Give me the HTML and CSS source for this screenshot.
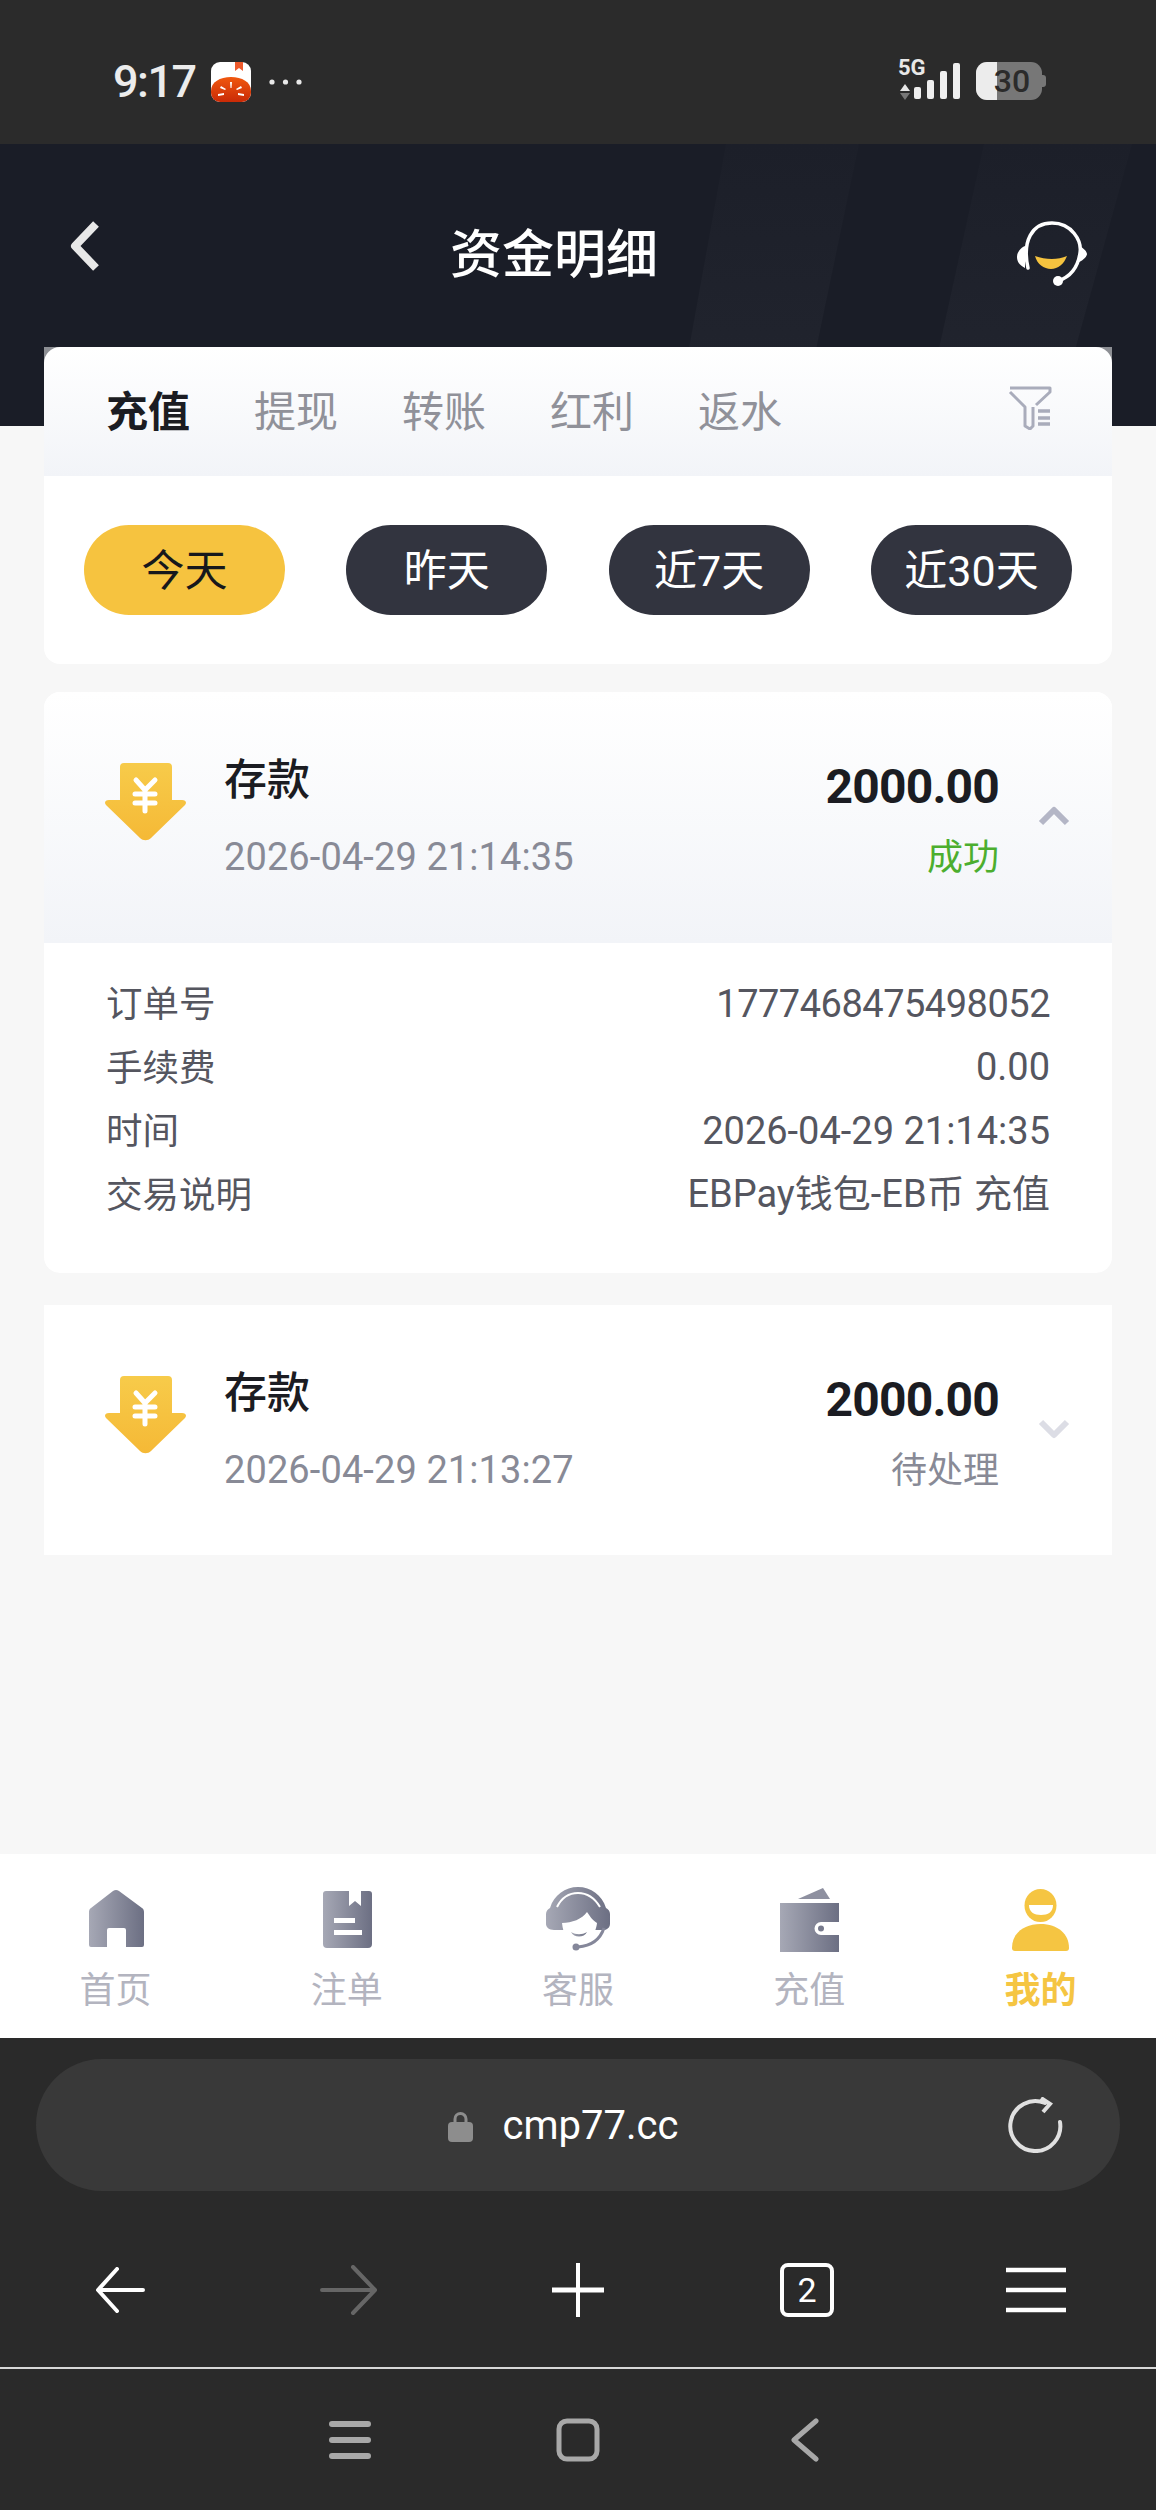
FILE: index.html
```html
<!DOCTYPE html>
<html lang="zh">
<head>
<meta charset="utf-8">
<title>资金明细</title>
<link rel="stylesheet" href="styles.css">
</head>
<body>
<div class="phone">
  <div class="status">
    <div class="status-left">
      <span class="clock">9:17</span>
      <svg class="app" width="40" height="40" viewBox="0 0 40 40"><defs><linearGradient id="tom" x1="0" y1="0" x2="0" y2="1"><stop offset="0" stop-color="#f0580f"/><stop offset="1" stop-color="#c92a06"/></linearGradient></defs><rect width="40" height="40" rx="9" fill="#fff"/><path d="M24 0h8v9l-4-3-4 3z" fill="#ee5a2c"/><path d="M0 29C0 20 9 15 20 15s20 5 20 14v2a9 9 0 0 1-9 9H9a9 9 0 0 1-9-9z" fill="url(#tom)"/><path d="M19 20h2l-.5 6h-1zM10 24l5 3-1 1-5-2zM30 24l1 2-5 2-1-1zM7 32l6-1v2l-6 1zM33 32v2l-6-1v-2z" fill="#fff"/></svg>
      <svg class="more" width="33" height="6" viewBox="0 0 33 6"><circle cx="3" cy="3" r="2.6" fill="#e8e8e8"/><circle cx="16.5" cy="3" r="2.6" fill="#e8e8e8"/><circle cx="30" cy="3" r="2.6" fill="#e8e8e8"/></svg>
    </div>
    <div class="status-right">
      <div class="net">
        <span class="net-label">5G</span>
        <svg width="10" height="16" viewBox="0 0 10 16"><path d="M5 0l5 7H0z" fill="#e8e8e8"/><path d="M0 9h10l-5 7z" fill="#777"/></svg>
      </div>
      <svg class="bars" width="46" height="36" viewBox="0 0 46 36"><rect y="24" width="7" height="12" rx="2" fill="#eee"/><rect x="13" y="17" width="7" height="19" rx="2" fill="#eee"/><rect x="26" y="8" width="7" height="28" rx="2" fill="#eee"/><rect x="39" width="7" height="36" rx="2" fill="#eee"/></svg>
      <div class="battery">
        <span class="battery-fill"></span>
        <span class="battery-num">30</span>
        <span class="battery-cap"></span>
      </div>
    </div>
  </div>

  <header class="head">
    <svg class="stripes" width="1156" height="282" viewBox="0 0 1156 282"><defs><linearGradient id="band" x1="0" y1="0" x2="0" y2="1"><stop offset="0" stop-color="#1c1f29"/><stop offset="1" stop-color="#22252f"/></linearGradient></defs><path d="M726 0h133l-59 282H675z" fill="url(#band)"/><path d="M984 0h148l-78 282H922z" fill="url(#band)"/></svg>
    <svg class="head-back" width="32" height="52" viewBox="0 0 32 52"><path d="M27 4L6 26l21 22" fill="none" stroke="#e8e8e8" stroke-width="8" stroke-linejoin="round"/></svg>
    <h1 class="head-title">资金明细</h1>
    <svg class="head-agent" width="72" height="66" viewBox="0 0 72 66"><path d="M12 47C6 20 16 2 36 2c20 0 30 18 28 30-2 14-10 24-22 28" fill="none" stroke="#fff" stroke-width="3.500" stroke-linecap="round"/><path d="M9 25v22C3 44 1 40 1 36s3-9 8-11zM63 25c5 2 8 6 8 8s-3 6-8 8z" fill="#fff"/><circle cx="42" cy="60" r="5" fill="#fff"/><path d="M19 35c11 4 23 4 32 0-3 8-9 13-16 13S21 43 19 35z" fill="#f5c33f"/></svg>
  </header>

  <main class="content">
    <section class="filter-card">
      <div class="tabs-wrap">
        <div class="tabs">
          <span class="tab tab-on">充值</span>
          <span class="tab">提现</span>
          <span class="tab">转账</span>
          <span class="tab">红利</span>
          <span class="tab">返水</span>
          <svg class="filter-ico" width="44" height="44" viewBox="0 0 44 44"><path d="M2 2h40v4L28 19M2 6l15 15v19l5 3 3-3V21" fill="none" stroke="#a9acbb" stroke-width="3" stroke-linejoin="round"/><path d="M30 25h12M30 32h12M30 38h12" stroke="#a9acbb" stroke-width="3.500"/></svg>
        </div>
      </div>
      <div class="pills">
        <span class="pill pill-on">今天</span>
        <span class="pill">昨天</span>
        <span class="pill">近7天</span>
        <span class="pill">近30天</span>
      </div>
    </section>

    <section class="record">
      <div class="rec-head rec-head-open">
        <svg class="rec-ico" width="81" height="78" viewBox="0 0 81 78"><defs><linearGradient id="gold" x1="0" y1="0" x2="0" y2="1"><stop offset="0" stop-color="#f7cb4a"/><stop offset="1" stop-color="#f5b936"/></linearGradient></defs><path d="M19 0h44a4 4 0 0 1 4 4v33h10c4 0 5 3 3 5L46 75c-3 3-8 3-11 0L1 42c-2-2-1-5 3-5h11V4a4 4 0 0 1 4-4z" fill="url(#gold)"/><path d="M31 17l9 10 10-10M40 27v21M30 31h20M30 40h20" fill="none" stroke="#fff" stroke-width="5" stroke-linecap="round"/></svg>
        <div class="rec-main">
          <div class="rec-title">存款</div>
          <div class="rec-date">2026-04-29 21:14:35</div>
        </div>
        <div class="rec-side">
          <div class="rec-amount">2000.00</div>
          <div class="rec-state rec-ok">成功</div>
        </div>
        <svg class="rec-chev" width="32" height="20" viewBox="0 0 32 20"><path d="M3 17L16 4l13 13" fill="none" stroke="#b4b6c6" stroke-width="6" stroke-linejoin="round"/></svg>
      </div>
      <dl class="details">
        <div class="row"><dt>订单号</dt><dd class="tight">1777468475498052</dd></div>
        <div class="row"><dt>手续费</dt><dd>0.00</dd></div>
        <div class="row"><dt>时间</dt><dd>2026-04-29 21:14:35</dd></div>
        <div class="row"><dt>交易说明</dt><dd>EBPay钱包-EB币 充值</dd></div>
      </dl>
    </section>

    <section class="record record-flat">
      <div class="rec-head">
        <svg class="rec-ico" width="81" height="78" viewBox="0 0 81 78"><path d="M19 0h44a4 4 0 0 1 4 4v33h10c4 0 5 3 3 5L46 75c-3 3-8 3-11 0L1 42c-2-2-1-5 3-5h11V4a4 4 0 0 1 4-4z" fill="url(#gold)"/><path d="M31 17l9 10 10-10M40 27v21M30 31h20M30 40h20" fill="none" stroke="#fff" stroke-width="5" stroke-linecap="round"/></svg>
        <div class="rec-main">
          <div class="rec-title">存款</div>
          <div class="rec-date">2026-04-29 21:13:27</div>
        </div>
        <div class="rec-side">
          <div class="rec-amount">2000.00</div>
          <div class="rec-state">待处理</div>
        </div>
        <svg class="rec-chev" width="32" height="20" viewBox="0 0 32 20"><path d="M3 3l13 13L29 3" fill="none" stroke="#dcdde5" stroke-width="6" stroke-linejoin="round"/></svg>
      </div>
    </section>
  </main>

  <nav class="tabbar">
    <svg width="0" height="0" class="defs"><defs><linearGradient id="steel" x1="0" y1="0" x2="1" y2="0"><stop offset="0" stop-color="#a6a8b5"/><stop offset="1" stop-color="#6c6f83"/></linearGradient></defs></svg>
    <div class="nav-item">
      <svg width="64" height="66" viewBox="0 0 64 66"><path d="M29 5c2-1.500 4-1.500 6 0l23 17c1.500 1 2 2.500 2 4v33a2 2 0 0 1-2 2H42V44a2 2 0 0 0-2-2H25a2 2 0 0 0-2 2v17H7a2 2 0 0 1-2-2V26c0-1.500.5-3 2-4z" fill="url(#steel)"/></svg>
      <span>首页</span>
    </div>
    <div class="nav-item">
      <svg width="64" height="66" viewBox="0 0 64 66"><path d="M11 5h23v15l6-5 6 5V5h8a3 3 0 0 1 3 3v50a4 4 0 0 1-4 4H12a4 4 0 0 1-4-4V8a3 3 0 0 1 3-3z" fill="url(#steel)"/><rect x="19" y="32" width="21" height="5" fill="#fff"/><rect x="19" y="44" width="28" height="5" fill="#fff"/></svg>
      <span>注单</span>
    </div>
    <div class="nav-item">
      <svg width="64" height="66" viewBox="0 0 64 66"><path d="M0 28c0-3 2-5 4-6C8 9 19 1 32 1s24 8 28 21c2 1 4 3 4 6v10c0 3-2 5-5 6H8c-5 0-8-3-8-6z" fill="url(#steel)"/><path d="M11 21c5-10 13-14 21-14s16 4 22 14" fill="none" stroke="#fff" stroke-width="2"/><path d="M16 37c10 0 20-4 25-11 3 4 5 8 10 11-1 11-9 21-19 21S17 48 16 37z" fill="#fff"/><path d="M25 46c5 3 11 3 16 0-3 6-13 6-16 0z" fill="url(#steel)"/><path d="M58 42c-4 12-14 18-26 19" fill="none" stroke="#85879a" stroke-width="3"/><circle cx="30" cy="61" r="3.500" fill="#85879a"/></svg>
      <span>客服</span>
    </div>
    <div class="nav-item">
      <svg width="64" height="66" viewBox="0 0 64 66"><path d="M21 13L46 2l7 11z" fill="#8e90a0"/><path d="M3 17h59v19H44a6.500 6.500 0 0 0 0 13h18v17H3z" fill="url(#steel)"/><circle cx="44" cy="42.500" r="3" fill="#777a8c"/></svg>
      <span>充值</span>
    </div>
    <div class="nav-item nav-on">
      <svg width="64" height="66" viewBox="0 0 64 66"><ellipse cx="32.500" cy="19.500" rx="16" ry="16.500" fill="#f5c542"/><path d="M21 19h24c0 7-5 10-12 10s-12-3-12-10z" fill="#fff"/><path d="M32.500 38C50 38 61 48 61 62c0 2-1 3-3 3H7c-2 0-3-1-3-3 0-14 11-24 28.500-24z" fill="#f5c542"/></svg>
      <span>我的</span>
    </div>
  </nav>

  <footer class="browser">
    <div class="url">
      <svg class="lock" width="25" height="31" viewBox="0 0 25 31"><path d="M7 12V8a5.500 5.500 0 0 1 11 0v4" fill="none" stroke="#8d8d8d" stroke-width="3"/><rect y="11" width="25" height="20" rx="4" fill="#8d8d8d"/></svg>
      <span class="url-text">cmp77.cc</span>
      <svg class="reload" width="56" height="56" viewBox="0 0 56 56"><path d="M38 6a25 25 0 1 0 15 19" fill="none" stroke="#e0e0e0" stroke-width="4" stroke-linecap="round"/><path d="M34 1l9 6-7 8" fill="none" stroke="#e0e0e0" stroke-width="4"/></svg>
    </div>
    <div class="tools">
      <svg width="50" height="46" viewBox="0 0 50 46"><path d="M48 23H5M22 2L3 23l19 21" fill="none" stroke="#fff" stroke-width="4" stroke-linecap="round" stroke-linejoin="round"/></svg>
      <svg width="58" height="50" viewBox="0 0 58 50"><path d="M2 25h52M33 2l22 23-22 23" fill="none" stroke="#666" stroke-width="4" stroke-linecap="round" stroke-linejoin="round"/></svg>
      <svg width="54" height="54" viewBox="0 0 54 54"><path d="M1 27h52" stroke="#fff" stroke-width="5"/><path d="M27 0v54" stroke="#fff" stroke-width="4"/></svg>
      <div class="tab-count">2</div>
      <svg width="62" height="46" viewBox="0 0 62 46"><path d="M1 3h60M1 23h60M1 43h60" stroke="#fff" stroke-width="4.500"/></svg>
    </div>
    <div class="sysnav">
      <svg width="42" height="40" viewBox="0 0 42 40"><path d="M3 4h36M3 20h36M3 36h36" stroke="#a8a8a8" stroke-width="6" stroke-linecap="round"/></svg>
      <svg width="44" height="44" viewBox="0 0 44 44"><rect x="3" y="3" width="38" height="38" rx="8" fill="none" stroke="#a8a8a8" stroke-width="5"/></svg>
      <svg class="sys-back" width="30" height="44" viewBox="0 0 30 44"><path d="M26 3L4 22l22 19" fill="none" stroke="#a8a8a8" stroke-width="5" stroke-linecap="round" stroke-linejoin="round"/></svg>
    </div>
  </footer>
</div>
</body>
</html>
```

FILE: styles.css
```css
* { box-sizing: border-box; }
html, body { margin: 0; padding: 0; }
body {
  font-family: "Roboto", "Noto Sans CJK SC", sans-serif;
  background: #f7f7f7;
}
.phone {
  width: 1156px;
  height: 2510px;
  display: flex;
  flex-direction: column;
  overflow: hidden;
}

/* status bar */
.status {
  height: 144px;
  background: #2b2b2b;
  display: flex;
  justify-content: space-between;
  align-items: flex-start;
  padding: 62px 114px 0 113px;
  flex: none;
}
.status-left { display: flex; align-items: center; }
.clock { font-size: 45px; font-weight: 500; line-height: 40px; letter-spacing: -1.500px; color: #ececec; width: 98px; }
.more { margin-left: 18px; }
.status-right { display: flex; align-items: flex-end; height: 38px; }
.net { display: flex; flex-direction: column; align-items: flex-start; width: 16px; }
.net svg { margin-left: 2px; margin-top: 8px; }
.net-label { font-size: 22px; font-weight: 700; line-height: 17px; color: #e8e8e8; white-space: nowrap; }
.bars { margin-bottom: 1px; margin-right: 16px; }
.battery {
  position: relative;
  width: 66px;
  height: 38px;
  border-radius: 11px;
  background: #777;
  display: flex;
  align-items: center;
  justify-content: center;
}
.battery-fill { position: absolute; left: 0; top: 0; bottom: 0; width: 21px; background: #ececec; border-radius: 11px 0 0 11px; }
.battery-num { position: relative; font-size: 32px; font-weight: 500; color: #2b2b2b; padding-left: 6px; }
.battery-cap { position: absolute; right: -4px; top: 13px; width: 4px; height: 12px; background: #777; border-radius: 0 3px 3px 0; }

/* header */
.head {
  position: relative;
  height: 282px;
  background: #1a1d27;
  flex: none;
  display: flex;
  justify-content: space-between;
  align-items: flex-start;
  padding: 76px 68px 0 69px;
}
.stripes { position: absolute; left: 0; top: 0; }
.head-back, .head-agent { position: relative; }
.head-agent { margin-top: 1px; }
.head-title {
  position: relative;
  margin: -7px 0 0 -9px;
  font-size: 52px;
  font-weight: 500;
  line-height: 76px;
  color: #fff;
  font-family: "Noto Sans CJK SC", sans-serif;
}

/* content */
.content {
  flex: 1;
  margin-top: -79px;
  padding: 0 44px;
  position: relative;
  display: flex;
  flex-direction: column;
}
.filter-card {
  background: #fff;
  border-radius: 0 0 16px 16px;
  height: 317px;
}
.tabs-wrap { background: #8d8f94; }
.tabs {
  height: 129px;
  border-radius: 16px 16px 0 0;
  background: linear-gradient(#fff, #f2f4f8);
  display: flex;
  align-items: center;
  gap: 64px;
  padding: 0 0 6px 62px;
  position: relative;
}
.tab { font-size: 42px; line-height: 56px; color: #909199; font-family: "Noto Sans CJK SC", sans-serif; }
.tab-on { color: #1b1c22; font-weight: 700; }
.filter-ico { position: absolute; top: 39px; right: 60px; }
.pills { display: flex; justify-content: space-between; padding: 49px 40px 0; }
.pill {
  width: 201px;
  height: 90px;
  padding-bottom: 6px;
  border-radius: 45px;
  background: #32343f;
  color: #fff;
  font-size: 43px;
  display: flex;
  align-items: center;
  justify-content: center;
}
.pill-on { background: #f6c33f; color: #17181c; }

.record {
  margin-top: 28px;
  background: #fff;
  border-radius: 16px;
}
.record-flat { margin-top: 32px; border-radius: 0; }
.rec-head {
  height: 250px;
  display: flex;
  align-items: flex-start;
  padding: 71px 42px 0 61px;
}
.rec-head-open {
  height: 251px;
  border-radius: 16px 16px 0 0;
  background: linear-gradient(#fff, #f2f4f8);
}
.rec-main { margin-left: 38px; flex: 1; margin-top: -12px; }
.rec-title { font-size: 43px; font-weight: 500; line-height: 58px; color: #1b1c22; }
.rec-date { font-size: 38px; line-height: 50px; color: #888a96; margin-top: 23px; letter-spacing: .1px; }
.rec-side { text-align: right; margin-top: -1px; }
.rec-amount { font-size: 48px; font-weight: 700; line-height: 50px; letter-spacing: -.8px; color: #1b1c22; }
.rec-state { font-size: 36px; line-height: 50px; color: #888a96; margin-top: 17px; font-family: "Noto Sans CJK SC", sans-serif; }
.rec-ok { color: #4cae2e; }
.rec-chev { margin-left: 39px; margin-top: 43px; flex: none; }

.details { margin: 0; padding: 29px 62px 0; height: 330px; }
.row { display: flex; justify-content: space-between; height: 63.500px; align-items: center; }
.row dt { margin: 0 0 3px; font-size: 36.500px; line-height: 50px; color: #55565f; font-family: "Noto Sans CJK SC", sans-serif; }
.row dd { margin: 0; font-size: 38px; line-height: 44px; color: #55565f; }
.row .tight { letter-spacing: -.5px; }

/* bottom tabbar */
.tabbar {
  height: 184px;
  background: #fff;
  flex: none;
  display: grid;
  grid-template-columns: repeat(5, 1fr);
  padding-top: 32px;
  position: relative;
}
.defs { position: absolute; }
.nav-item { display: flex; flex-direction: column; align-items: center; }
.nav-item svg { flex: none; }
.nav-item span { font-size: 36px; line-height: 54px; margin-top: 8px; color: #b3b4bf; font-family: "Noto Sans CJK SC", sans-serif; }
.nav-on span { color: #f5c542; font-weight: 700; }

/* browser chrome */
.browser { height: 472px; background: #2a2a2a; flex: none; display: flex; flex-direction: column; }
.url {
  margin: 21px 36px 0;
  height: 132px;
  border-radius: 66px;
  background: #393939;
  display: flex;
  align-items: center;
  justify-content: center;
  position: relative;
  padding-right: 30px;
}
.lock { margin-right: 30px; margin-top: 2px; }
.url-text { font-size: 40px; color: #fff; }
.reload { position: absolute; right: 57px; top: 38px; }
.tools {
  height: 178px;
  display: grid;
  grid-template-columns: repeat(5, 229px);
  justify-content: center;
  justify-items: center;
  align-items: center;
  border-bottom: 2px solid #d8d8d8;
  padding-top: 22px;
}
.tab-count {
  width: 54px;
  height: 54px;
  border: 4px solid #fff;
  border-radius: 8px;
  color: #fff;
  font-size: 34px;
  display: flex;
  align-items: center;
  justify-content: center;
}
.sysnav { flex: 1; display: flex; align-items: center; justify-content: center; gap: 185px; padding-right: 7px; }
.sys-back { margin-left: 5px; }
```
